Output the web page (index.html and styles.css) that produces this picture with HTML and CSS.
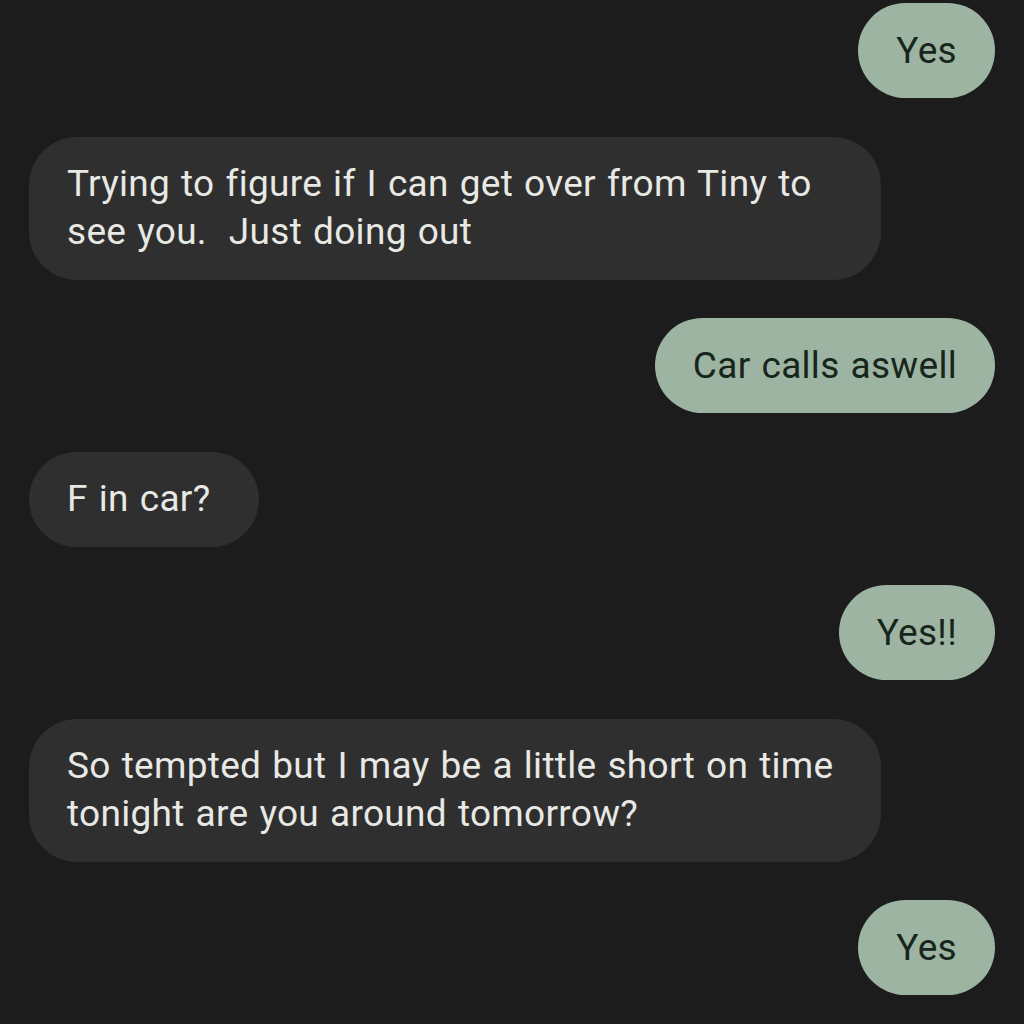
FILE: index.html
```html
<!DOCTYPE html>
<html>
<head>
    <link rel="stylesheet" href="styles.css">
  </head>
  <body>
    <div class="thread">
      <div class="msg sent">Yes</div>
      <div class="msg received">Trying to figure if I can get over from Tiny to see you.&nbsp; Just doing out</div>
      <div class="msg sent">Car calls aswell</div>
      <div class="msg received">F in car?&nbsp;</div>
      <div class="msg sent">Yes!!</div>
      <div class="msg received">So tempted but I may be a little short on time tonight are you around tomorrow?</div>
      <div class="msg sent">Yes</div>
    </div>
  </body>
</html>
```

FILE: styles.css
```css
body {
    margin: 0;
    background-color: #1b1c1b;
    font-family: Roboto, "Noto Sans", sans-serif;
  }

  .thread {
    display: flex;
    flex-direction: column;
    gap: 38.5px;
    padding: 3px 29px 0 29px;
  }

  .msg {
    max-width: 776px;
    padding: 23.5px 38px;
    font-size: 37px;
    line-height: 48px;
    letter-spacing: 0.3px;
    word-spacing: 1.5px;
    border-radius: 48px;
  }

  .sent {
    align-self: flex-end;
    background-color: #9cb4a1;
    color: #18251c;
  }

  .received {
    align-self: flex-start;
    background-color: #2e2f2e;
    color: #e8e8e5;
  }
```
